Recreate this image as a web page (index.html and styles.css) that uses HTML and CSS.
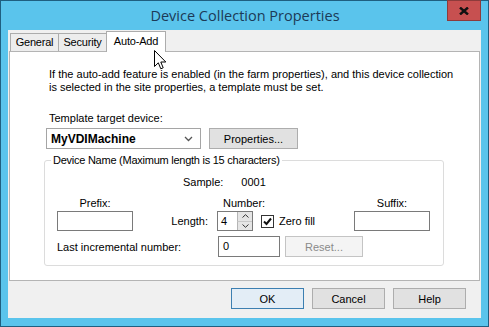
FILE: index.html
```html
<!DOCTYPE html>
<html lang="en">
<head>
    <meta charset="UTF-8">
    <meta name="viewport" content="width=device-width, initial-scale=1.0">
    <title>Device Collection Properties</title>
    <link rel="stylesheet" href="styles.css">
</head>
<body>

    <div class="window">
        <div class="titlebar">
            <span class="title">Device Collection Properties</span>
            <button class="close">
                <svg width="10" height="8" viewBox="0 0 10 8">
                    <path d="M1 0.5 L9 7.5 M9 0.5 L1 7.5" stroke="#111" stroke-width="2.4"/>
                </svg>
            </button>
        </div>

        <div class="client">
            <div class="tabs">
                <span class="tab">General</span>
                <span class="tab">Security</span>
                <span class="tab active">Auto-Add</span>
            </div>

            <div class="panel">
                <p class="intro">If the auto-add feature is enabled (in the farm properties), and this device collection<br>is selected in the site properties, a template must be set.</p>

                <div class="field-label">Template target device:</div>
                <div class="template-row">
                    <div class="combo">
                        <span>MyVDIMachine</span>
                        <svg width="9" height="6" viewBox="0 0 9 6">
                            <path d="M1 1 L4.5 4.5 L8 1" fill="none" stroke="#555" stroke-width="1.3"/>
                        </svg>
                    </div>
                    <button class="btn props-btn">Properties...</button>
                </div>

                <fieldset class="group">
                    <legend>Device Name (Maximum length is 15 characters)</legend>
                    <div class="sample-row">
                        <span>Sample:</span>
                        <span class="sample-value">0001</span>
                    </div>
                    <div class="name-grid">
                        <span class="centered">Prefix:</span>
                        <span></span>
                        <span class="number-label">Number:</span>
                        <span class="centered">Suffix:</span>

                        <div class="textbox"></div>
                        <span class="length-label">Length:</span>
                        <div class="number-cell">
                            <div class="spinner">
                                <span class="spin-value">4</span>
                                <div class="spin-buttons">
                                    <span class="spin-btn">
                                        <svg width="7" height="4" viewBox="0 0 7 4"><path d="M0.5 3.5 L3.5 0.7 L6.5 3.5" fill="none" stroke="#333" stroke-width="1"/></svg>
                                    </span>
                                    <span class="spin-btn">
                                        <svg width="7" height="4" viewBox="0 0 7 4"><path d="M0.5 0.5 L3.5 3.3 L6.5 0.5" fill="none" stroke="#333" stroke-width="1"/></svg>
                                    </span>
                                </div>
                            </div>
                            <span class="checkbox">
                                <svg width="11" height="11" viewBox="0 0 11 11"><path d="M2 5.5 L4.5 8 L9 2.5" fill="none" stroke="#111" stroke-width="2"/></svg>
                            </span>
                            <span>Zero fill</span>
                        </div>
                        <div class="textbox"></div>
                    </div>
                    <div class="last-row">
                        <span class="last-label">Last incremental number:</span>
                        <div class="textbox last-box">0</div>
                        <button class="btn reset-btn" disabled>Reset...</button>
                    </div>
                </fieldset>
            </div>

            <div class="footer">
                <button class="btn default">OK</button>
                <button class="btn">Cancel</button>
                <button class="btn">Help</button>
            </div>
        </div>

        <svg class="cursor" width="13" height="20" viewBox="0 0 13 20">
            <path d="M0.5 0.5 L0.5 16.5 L4.3 12.8 L6.8 18.8 L9.2 17.8 L6.8 12 L11.8 12 Z" fill="#fff" stroke="#000" stroke-width="1"/>
        </svg>
    </div>

</body>
</html>
```

FILE: styles.css
```css
body {
    margin: 0;
    font-family: "Liberation Sans", Arial, sans-serif;
    font-size: 11px;
    color: #000;
}

.window {
    position: relative;
    width: 489px;
    height: 327px;
    box-sizing: border-box;
    background-color: #5ac4ec;
    border: 1px solid #1f5f80;
    display: flex;
    flex-direction: column;
}

.titlebar {
    height: 29px;
    display: flex;
    justify-content: center;
    align-items: center;
}
.title {
    font-family: "Open Sans", sans-serif;
    font-size: 14.5px;
    color: #1c3a57;
    margin-left: 1px;
}
.close {
    position: absolute;
    top: -1px;
    right: 7px;
    width: 34px;
    height: 21px;
    padding: 0;
    border: 1px solid #8d3b3b;
    background-color: #c75050;
    display: flex;
    align-items: center;
    justify-content: center;
}

.client {
    flex: 1;
    margin: 0 7px 8px;
    padding: 1px 1px 0;
    background-color: #f0f0f0;
    display: flex;
    flex-direction: column;
}

.tabs {
    display: flex;
    align-items: flex-end;
    height: 21px;
    padding-left: 1px;
    margin-bottom: -1px;
    position: relative;
    z-index: 1;
}
.tab {
    width: 49px;
    box-sizing: border-box;
    height: 18px;
    line-height: 17px;
    text-align: center;
    letter-spacing: -0.2px;
    border: 1px solid #acacac;
    border-bottom: none;
    background-color: #ededed;
    margin-right: -1px;
    margin-bottom: 1px;
}
.tab.active {
    width: 60px;
    height: 21px;
    line-height: 19px;
    margin-bottom: 0;
    background-color: #fff;
}

.panel {
    height: 230px;
    box-sizing: border-box;
    background-color: #fff;
    border: 1px solid #b4b4b4;
    padding: 16px 0 0 35px;
}

.intro {
    margin: 0 0 0 4px;
    line-height: 13px;
}
.field-label {
    margin: 18px 0 0 4px;
    line-height: 13px;
}

.template-row {
    display: flex;
    margin-top: 3px;
}
.combo {
    width: 155px;
    height: 21px;
    box-sizing: border-box;
    margin-left: 1px;
    border: 1px solid #a5a5a5;
    display: flex;
    align-items: center;
    justify-content: space-between;
    padding: 0 7px 0 4px;
    font-weight: bold;
    font-size: 12px;
}

.btn {
    font-family: "Liberation Sans", Arial, sans-serif;
    font-size: 11px;
    color: #000;
    height: 21px;
    padding: 0;
    border: 1px solid #adadad;
    background-color: #e1e1e1;
}
.props-btn {
    width: 89px;
    margin-left: 8px;
}

.group {
    width: 400px;
    box-sizing: border-box;
    margin: 5px 0 0 -1px;
    padding: 0 0 8px 12px;
    border: 1px solid #dcdcdc;
    border-radius: 3px;
}
.group legend {
    margin-left: -6px;
    padding: 0 2px;
    line-height: 13px;
    letter-spacing: -0.25px;
}

.sample-row {
    display: flex;
    margin: 9px 0 0 126px;
    line-height: 13px;
}
.sample-value {
    margin-left: 18px;
}

.name-grid {
    display: grid;
    grid-template-columns: 76px 84px 137px 76px;
    grid-template-rows: 13px 20px;
    row-gap: 2px;
    margin-top: 7px;
    align-items: center;
}
.centered {
    text-align: center;
}
.number-label {
    margin-left: 6px;
}
.length-label {
    text-align: right;
    padding-right: 9px;
}

.textbox {
    height: 20px;
    box-sizing: border-box;
    border: 1px solid #7a7a7a;
    background-color: #fff;
}

.number-cell {
    display: flex;
    align-items: center;
}
.spinner {
    display: flex;
    width: 36px;
    height: 20px;
    box-sizing: border-box;
    border: 1px solid #7a7a7a;
}
.spin-value {
    flex: 1;
    padding-left: 3px;
    line-height: 18px;
}
.spin-buttons {
    width: 15px;
    display: flex;
    flex-direction: column;
}
.spin-btn {
    flex: 1;
    background-color: #e5e5e5;
    border-left: 1px solid #b5b5b5;
    display: flex;
    align-items: center;
    justify-content: center;
}
.spin-btn + .spin-btn {
    border-top: 1px solid #c8c8c8;
}
.checkbox {
    width: 13px;
    height: 13px;
    box-sizing: border-box;
    border: 1px solid #333;
    background-color: #fff;
    margin: 0 5px 0 8px;
    display: flex;
    align-items: center;
    justify-content: center;
}

.last-row {
    display: flex;
    align-items: center;
    margin-top: 5px;
}
.last-label {
    width: 161px;
}
.last-box {
    width: 62px;
    height: 21px;
    padding-left: 4px;
    line-height: 19px;
}
.reset-btn {
    width: 78px;
    margin-left: 5px;
    background-color: #f4f4f4;
    border-color: #c4c4c4;
    color: #8a8a8a;
}

.footer {
    display: flex;
    justify-content: flex-end;
    gap: 8px;
    padding: 7px 14px 0 0;
}
.footer .btn {
    width: 73px;
}
.footer .btn.default {
    border-color: #3c7fb1;
    background-color: #e3edf6;
}

.cursor {
    position: absolute;
    left: 153px;
    top: 49px;
    z-index: 2;
}
```
